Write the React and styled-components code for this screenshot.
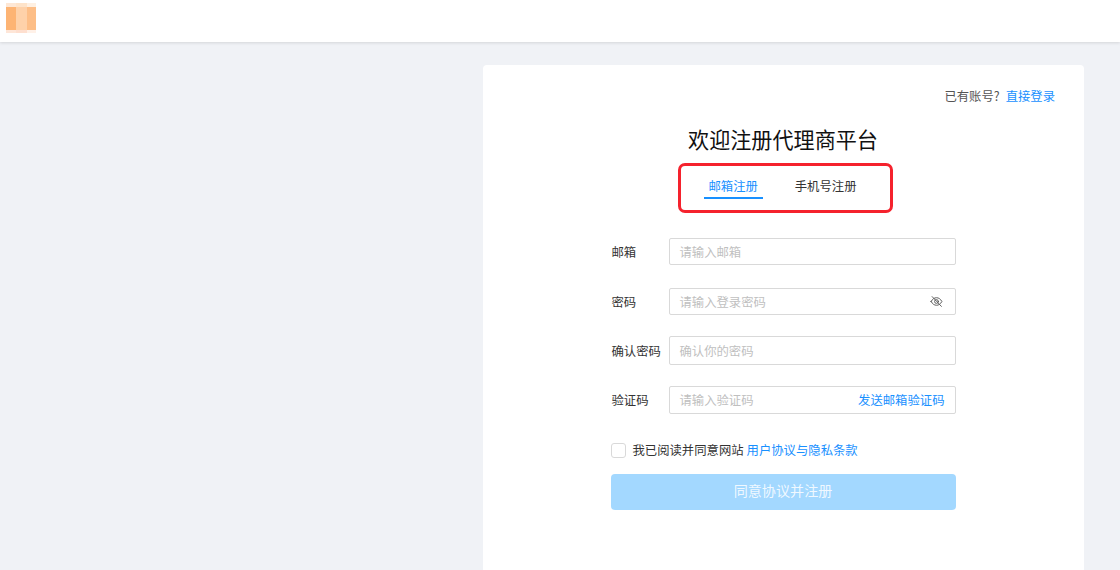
import React from "react";
import styled, { createGlobalStyle } from "styled-components";

const GlobalStyle = createGlobalStyle`
  html, body {
    margin: 0;
    height: 570px;
    overflow: hidden;
    background: #f0f2f6;
    font-family: "Noto Sans CJK SC", "Noto Sans", sans-serif;
    font-size: 12.35px;
    color: #333;
  }
  * { box-sizing: border-box; }
`;

function Logo() {
    return (
        <svg width="30" height="30" viewBox="0 0 30 30">
            <rect x="0" y="0" width="10" height="4" fill="#fde7d5" />
            <rect x="10" y="0" width="11" height="4" fill="#fee3c9" />
            <rect x="21" y="0" width="9" height="4" fill="#fef0e2" />
            <rect x="0" y="4" width="10" height="23" fill="#fdb474" />
            <rect x="10" y="4" width="11" height="23" fill="#fed1a9" />
            <rect x="21" y="4" width="9" height="23" fill="#fdbe87" />
            <rect x="0" y="27" width="10" height="3" fill="#fee6d8" />
            <rect x="10" y="27" width="11" height="3" fill="#fedfcf" />
            <rect x="21" y="27" width="9" height="3" fill="#fff1e8" />
        </svg>
    );
}

function EyeOff() {
    return (
        <EyeIcon width="13" height="13" viewBox="0 0 24 24" fill="none" stroke="#555" strokeWidth="1.7" strokeLinecap="round">
            <path d="M2 12c2.600-4.600 6-7 10-7s7.400 2.400 10 7c-2.600 4.600-6 7-10 7s-7.400-2.400-10-7z" />
            <circle cx="12" cy="12" r="3.500" />
            <path d="M4 3l17 18" />
        </EyeIcon>
    );
}

function App() {
    return (
        <>
            <GlobalStyle />
            <Header>
                <Logo />
            </Header>
            <Main>
                <Card>
                    <LoginHint>
                        <span>已有账号?</span>
                        <BlueLink>直接登录</BlueLink>
                    </LoginHint>
                    <Title>欢迎注册代理商平台</Title>
                    <TabFrame>
                        <Tab $active>邮箱注册</Tab>
                        <Tab>手机号注册</Tab>
                    </TabFrame>
                    <Form>
                        <Row $mb={23}>
                            <Label>邮箱</Label>
                            <Field>
                                <Placeholder>请输入邮箱</Placeholder>
                            </Field>
                        </Row>
                        <Row $mb={21}>
                            <Label>密码</Label>
                            <Field>
                                <Placeholder>请输入登录密码</Placeholder>
                                <EyeOff />
                            </Field>
                        </Row>
                        <Row $mb={21}>
                            <Label>确认密码</Label>
                            <Field $height={29}>
                                <Placeholder>确认你的密码</Placeholder>
                            </Field>
                        </Row>
                        <Row $mb={27}>
                            <Label>验证码</Label>
                            <Field $height={28}>
                                <Placeholder>请输入验证码</Placeholder>
                                <BlueLink>发送邮箱验证码</BlueLink>
                            </Field>
                        </Row>
                        <Agreement>
                            <Checkbox />
                            <span>我已阅读并同意网站</span>
                            <BlueLink>用户协议与隐私条款</BlueLink>
                        </Agreement>
                        <SubmitButton>同意协议并注册</SubmitButton>
                    </Form>
                </Card>
            </Main>
        </>
    );
}

export default App;

const Header = styled.header`
    height: 42px;
    padding: 3px 6px 0;
    background: #fff;
    box-shadow: 0 1px 3px rgba(0, 0, 0, 0.12);
    position: relative;
`

const Main = styled.main`
    display: flex;
    justify-content: flex-start;
    padding: 23px 0 0 483px;
`

const Card = styled.section`
    width: 601px;
    height: 520px;
    padding: 22px 29px 0 28px;
    background: #fff;
    border-radius: 4px;
    display: flex;
    flex-direction: column;
    align-items: center;
`

const LoginHint = styled.div`
    align-self: flex-end;
    height: 18px;
    line-height: 18px;
    color: #555;
    display: flex;
    gap: 6px;
`

const BlueLink = styled.span`
    color: #1890ff;
`

const Title = styled.h1`
    margin: 19px 0 0;
    height: 30px;
    line-height: 30px;
    font-size: 21.1px;
    font-weight: 400;
    color: #111;
`

const TabFrame = styled.div`
    width: 215px;
    height: 50px;
    margin: 9px 0 0 4px;
    padding: 10px 22px 0 23px;
    border: 3px solid #f5222d;
    border-radius: 7px;
    display: flex;
    justify-content: space-between;
    align-items: flex-start;
`

const Tab = styled.div`
    height: 23px;
    line-height: 20px;
    padding: 0 ${(p) => (p.$active ? "5px" : "11px")} 0 ${(p) => (p.$active ? "5px" : "0")};
    color: ${(p) => (p.$active ? "#1890ff" : "#333")};
    border-bottom: 2px solid ${(p) => (p.$active ? "#1890ff" : "transparent")};
`

const Form = styled.form`
    width: 345px;
    margin-top: 25px;
    display: flex;
    flex-direction: column;
`

const Row = styled.div`
    display: flex;
    align-items: center;
    margin-bottom: ${(p) => p.$mb}px;
`

const Label = styled.label`
    width: 58px;
    padding-left: 1px;
    flex: none;
    color: #333;
`

const Field = styled.div`
    flex: 1;
    height: ${(p) => p.$height || 27}px;
    padding: 0 10px;
    border: 1px solid #d9d9d9;
    border-radius: 2px;
    display: flex;
    align-items: center;
    justify-content: space-between;
`

const EyeIcon = styled.svg`
    margin-right: 2px;
`

const Placeholder = styled.span`
    color: #bfbfbf;
`

const Agreement = styled.div`
    display: flex;
    align-items: center;
    height: 18px;
    gap: 3px;
`

const Checkbox = styled.span`
    width: 15px;
    height: 15px;
    margin-right: 4px;
    background: #fff;
    border: 1px solid #d9d9d9;
    border-radius: 3px;
`

const SubmitButton = styled.button`
    height: 36px;
    margin-top: 15px;
    padding: 0 0 4px;
    border: 0;
    border-radius: 4px;
    background: #a3d8ff;
    color: rgba(255, 255, 255, 0.85);
    font-family: inherit;
    font-size: 14.1px;
`
